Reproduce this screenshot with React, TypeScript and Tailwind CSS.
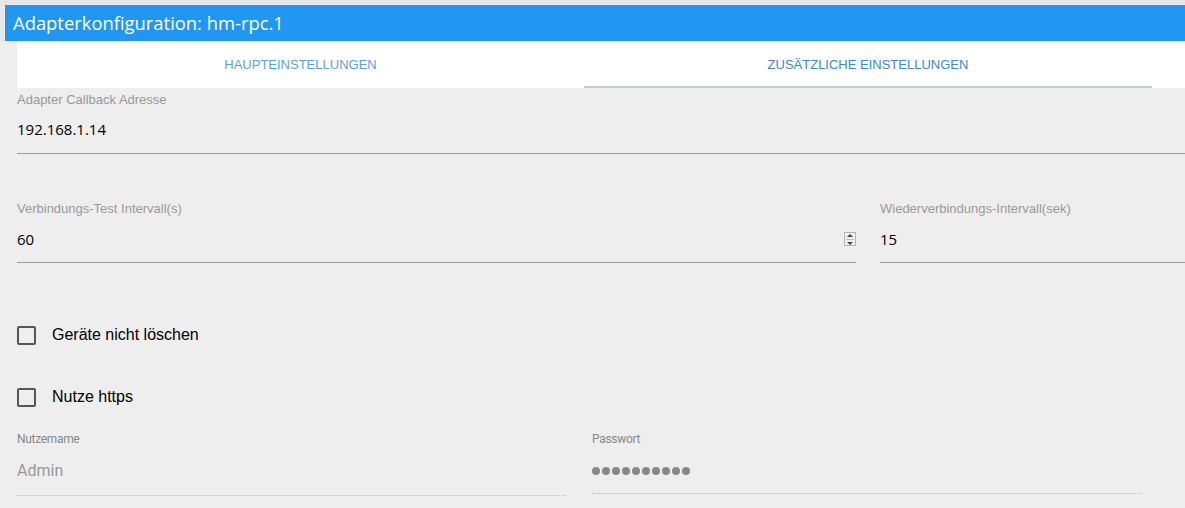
export default function App() {
  const sans = { fontFamily: '"Liberation Sans", Arial, sans-serif' };
  const open = { fontFamily: '"Open Sans", "Noto Sans", sans-serif' };
  const rob = { fontFamily: 'Roboto, "Liberation Sans", sans-serif' };
  return (
    <div className="w-[1185px] h-[508px] overflow-hidden bg-[#eeeeee] relative">
      <div className="h-[5px] bg-[#e4e6e8]" />
      <div className="flex">
        <div className="w-[5px] bg-[#e8e8e8]" />
        <div className="flex-1 h-[36px] bg-[#2196f3] flex items-center pl-[8px]">
          <span className="text-white text-[18.4px] leading-none" style={open}>Adapterkonfiguration: hm-rpc.1</span>
        </div>
      </div>
      <div className="ml-[17px] h-[47px] bg-white flex" style={sans}>
        <div className="w-[567px] flex items-center justify-center text-[13px] text-[#5f9fd8] pt-[1px]">HAUPTEINSTELLUNGEN</div>
        <div className="w-[568px] flex items-center justify-center text-[13px] text-[#3f88c8] border-b-2 border-[#b8d0e2] pt-[3px]">ZUSÄTZLICHE EINSTELLUNGEN</div>
      </div>
      <div className="pl-[17px]">
        <div className="text-[13px] text-[#999] leading-none mt-[5px]" style={sans}>Adapter Callback Adresse</div>
        <div className="text-[15px] text-black mt-[16px] leading-none" style={open}>192.168.1.14</div>
        <div className="h-px bg-[#9a9a9a] mt-[16px]" />
        <div className="flex mt-[48px]">
          <div className="w-[839px]">
            <div className="text-[13px] text-[#999] leading-none" style={sans}>Verbindungs-Test Intervall(s)</div>
            <div className="flex items-center justify-between mt-[16px] h-[16px]">
              <span className="text-[15px] text-black leading-none" style={open}>60</span>
              <div className="w-[12px] h-[14px] border border-[#b5b5b5] bg-[#f0f0f0] flex flex-col items-center justify-center gap-[2px]">
                <div className="w-0 h-0 border-l-[3px] border-r-[3px] border-b-[3px] border-l-transparent border-r-transparent border-b-[#444]" />
                <div className="w-[8px] h-px bg-[#bbb]" />
                <div className="w-0 h-0 border-l-[3px] border-r-[3px] border-t-[3px] border-l-transparent border-r-transparent border-t-[#444]" />
              </div>
            </div>
            <div className="h-px bg-[#9a9a9a] mt-[15px]" />
          </div>
          <div className="ml-[24px] flex-1">
            <div className="text-[13px] text-[#999] leading-none" style={sans}>Wiederverbindungs-Intervall(sek)</div>
            <div className="mt-[16px] h-[16px] flex items-center">
              <span className="text-[15px] text-black leading-none" style={open}>15</span>
            </div>
            <div className="h-px bg-[#9a9a9a] mt-[15px]" />
          </div>
        </div>
        <div className="flex items-center mt-[60px]">
          <div className="w-[19px] h-[19px] border-2 border-[#555] rounded-[2px]" />
          <span className="ml-[16px] text-[16px] text-black" style={sans}>Geräte nicht löschen</span>
        </div>
        <div className="flex items-center mt-[38px]">
          <div className="w-[19px] h-[19px] border-2 border-[#555] rounded-[2px]" />
          <span className="ml-[16px] text-[16px] text-black" style={sans}>Nutze https</span>
        </div>
        <div className="flex mt-[24px]" style={rob}>
          <div className="w-[549px]">
            <div className="text-[12px] text-[#888] leading-none tracking-[-0.3px]">Nutzername</div>
            <div className="text-[16px] text-[#999] leading-none mt-[18px]">Admin</div>
            <div className="mt-[16px] border-t border-dotted border-[#bbb]" />
          </div>
          <div className="ml-[26px] w-[550px]">
            <div className="text-[12px] text-[#888] leading-none tracking-[-0.3px]">Passwort</div>
            <div className="flex gap-[2px] mt-[21px] h-[10px] items-center">
              {Array.from({ length: 10 }).map((_, i) => (
                <div key={i} className="w-[8px] h-[8px] rounded-full bg-[#888]" />
              ))}
            </div>
            <div className="mt-[17px] border-t border-dotted border-[#bbb]" />
          </div>
        </div>
      </div>
    </div>
  );
}
